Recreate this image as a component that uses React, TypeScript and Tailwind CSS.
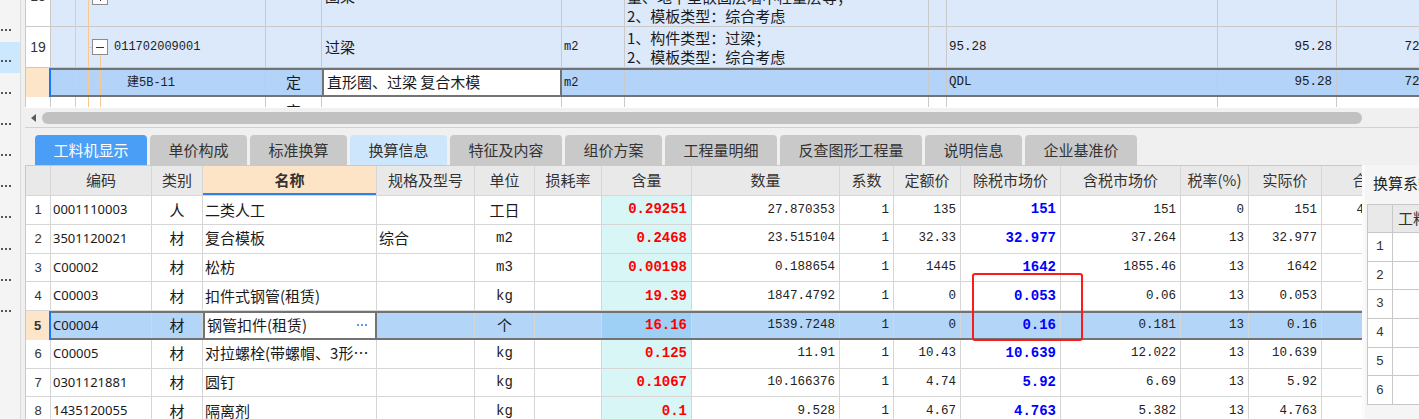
import clsx from 'clsx';

// ============= Data =============

type TreeKind = 'collapsed' | 'expanded' | 'leaf' | 'cont';

type TopRowData = {
  no: string;
  tree: TreeKind;
  code: string;
  indent: string;
  type?: string;
  name?: string;
  unit?: string;
  feat?: string[];
  expr?: string;
  qty?: string;
  last?: string;
  h: string;
  mt?: string;
  selected?: boolean;
  bg: string;
};

const topRows: TopRowData[] = [
  {
    no: '18',
    tree: 'collapsed',
    code: '011702008002',
    indent: 'left-[63px]',
    name: '圈梁',
    unit: 'm2',
    feat: ['1、构件类型：圈梁（含地下室嵌固层', '量、地下室嵌固层墙中柱量层等；', '2、模板类型：综合考虑'],
    expr: '100.76',
    qty: '100.76',
    last: '72.47',
    h: 'h-[60px]',
    mt: '-mt-[33px]',
    bg: 'bg-[#dce9fb]',
  },
  {
    no: '19',
    tree: 'expanded',
    code: '011702009001',
    indent: 'left-[63px]',
    name: '过梁',
    unit: 'm2',
    feat: ['1、构件类型：过梁；', '2、模板类型：综合考虑'],
    expr: '95.28',
    qty: '95.28',
    last: '72.47',
    h: 'h-[41px]',
    bg: 'bg-[#dce9fb]',
  },
  {
    no: '',
    tree: 'leaf',
    code: '建5B-11',
    indent: 'left-[76px]',
    type: '定',
    name: '直形圈、过梁 复合木模',
    unit: 'm2',
    expr: 'QDL',
    qty: '95.28',
    last: '72.47',
    h: 'h-[29px]',
    selected: true,
    bg: 'bg-[#b3d4f8]',
  },
  {
    no: '',
    tree: 'cont',
    code: '',
    indent: 'left-[76px]',
    type: '定',
    h: 'h-[29px]',
    bg: 'bg-white',
  },
];

type BottomRowData = {
  code: string;
  cat: string;
  name: string;
  spec?: string;
  unit: string;
  amt: string;
  qty: string;
  quota: string;
  mkt: string;
  mktTax: string;
  rate: string;
  real: string;
  total?: string;
};

const bottomRows: BottomRowData[] = [
  { code: '0001110003', cat: '人', name: '二类人工', unit: '工日', amt: '0.29251', qty: '27.870353', quota: '135', mkt: '151', mktTax: '151', rate: '0', real: '151', total: '4208.42' },
  { code: '3501120021', cat: '材', name: '复合模板', spec: '综合', unit: 'm2', amt: '0.2468', qty: '23.515104', quota: '32.33', mkt: '32.977', mktTax: '37.264', rate: '13', real: '32.977' },
  { code: 'C00002', cat: '材', name: '松枋', unit: 'm3', amt: '0.00198', qty: '0.188654', quota: '1445', mkt: '1642', mktTax: '1855.46', rate: '13', real: '1642' },
  { code: 'C00003', cat: '材', name: '扣件式钢管(租赁)', unit: 'kg', amt: '19.39', qty: '1847.4792', quota: '0', mkt: '0.053', mktTax: '0.06', rate: '13', real: '0.053' },
  { code: 'C00004', cat: '材', name: '钢管扣件(租赁)', unit: '个', amt: '16.16', qty: '1539.7248', quota: '0', mkt: '0.16', mktTax: '0.181', rate: '13', real: '0.16' },
  { code: 'C00005', cat: '材', name: '对拉螺栓(带螺帽、3形卡件)', unit: 'kg', amt: '0.125', qty: '11.91', quota: '10.43', mkt: '10.639', mktTax: '12.022', rate: '13', real: '10.639' },
  { code: '0301121881', cat: '材', name: '圆钉', unit: 'kg', amt: '0.1067', qty: '10.166376', quota: '4.74', mkt: '5.92', mktTax: '6.69', rate: '13', real: '5.92' },
  { code: '1435120055', cat: '材', name: '隔离剂', unit: 'kg', amt: '0.1', qty: '9.528', quota: '4.67', mkt: '4.763', mktTax: '5.382', rate: '13', real: '4.763' },
];

const SELECTED_ROW = 4;

const tabs = [
  { label: '工料机显示', w: 'w-[112px]', tone: 'bg-[#4a9ef6] text-white' },
  { label: '单价构成', w: 'w-[97px]', tone: 'bg-[#c9c9c9] text-[#333]' },
  { label: '标准换算', w: 'w-[97px]', tone: 'bg-[#c9c9c9] text-[#333]' },
  { label: '换算信息', w: 'w-[97px]', tone: 'bg-[#cde6fb] text-[#333]' },
  { label: '特征及内容', w: 'w-[112px]', tone: 'bg-[#c9c9c9] text-[#333]' },
  { label: '组价方案', w: 'w-[97px]', tone: 'bg-[#c9c9c9] text-[#333]' },
  { label: '工程量明细', w: 'w-[112px]', tone: 'bg-[#c9c9c9] text-[#333]' },
  { label: '反查图形工程量', w: 'w-[142px]', tone: 'bg-[#c9c9c9] text-[#333]' },
  { label: '说明信息', w: 'w-[97px]', tone: 'bg-[#c9c9c9] text-[#333]' },
  { label: '企业基准价', w: 'w-[112px]', tone: 'bg-[#c9c9c9] text-[#333]' },
];

const MONO = "font-['Liberation_Mono','Noto_Sans_CJK_SC',monospace]";
const GRID_LINE = 'border-[#c9c9c9]';
const CELL_LINE = 'border-[#d6d6d6]';

// ============= Left strip =============

function LeftStrip() {
  return (
    <div className="flex w-[25px] shrink-0">
      <div className="w-[21px] shrink-0 border-r border-[#dcdcdc] bg-[#f4f4f4] pt-[11px]">
        {Array.from({ length: 10 }).map((_, i) => (
          <div
            key={i}
            className={clsx('flex h-[31.2px] items-end pb-[11px]', i === 1 && 'bg-[#cce8ff]')}
          >
            <div className="flex gap-[2px] pl-[1px]">
              <span className="h-[2px] w-[2px] bg-[#555]" />
              <span className="h-[2px] w-[2px] bg-[#555]" />
              <span className="h-[2px] w-[2px] bg-[#555]" />
            </div>
          </div>
        ))}
      </div>
    </div>
  );
}

// ============= Top grid =============

function Tree({ kind }: { kind: TreeKind }) {
  return (
    <>
      <span className="absolute bottom-0 left-[24px] top-0 w-px bg-[#f8c88f]" />
      <span className="absolute bottom-0 left-[37px] top-0 w-px bg-[#f8c88f]" />
      {kind === 'expanded' && (
        <span className="absolute bottom-0 left-[49px] top-[calc(50%+8px)] w-px bg-[#f8c88f]" />
      )}
      {(kind === 'leaf' || kind === 'cont') && (
        <span className="absolute bottom-0 left-[49px] top-0 w-px bg-[#f8c88f]" />
      )}
      {kind === 'leaf' && <span className="absolute left-[49px] top-1/2 h-px w-[20px] bg-[#f8c88f]" />}
      {(kind === 'collapsed' || kind === 'expanded') && (
        <>
          <span className="absolute left-[37px] top-1/2 h-px w-[4px] bg-[#f8c88f]" />
          <span className="absolute left-[41px] top-1/2 h-[16px] w-[16px] -translate-y-1/2 border border-[#8c8c8c] bg-white">
            <span className="absolute left-[3px] top-[6.5px] h-px w-[8px] bg-[#333]" />
            {kind === 'collapsed' && <span className="absolute left-[6.5px] top-[3px] h-[8px] w-px bg-[#333]" />}
          </span>
        </>
      )}
    </>
  );
}

function TopRow({ r }: { r: TopRowData }) {
  const sel = r.selected;
  const cell = clsx('flex h-full shrink-0 items-center border-r', GRID_LINE);
  return (
    <div className={clsx('flex shrink-0', r.h, r.mt, !sel && 'border-b', GRID_LINE)}>
      <div
        className={clsx(
          "flex w-[25px] shrink-0 items-center justify-center font-['Liberation_Sans',sans-serif] text-[14px] text-[#333]",
          sel ? 'border-r-2 border-r-[#1677ff] bg-[#fde5c9]' : clsx('border-r bg-white', GRID_LINE),
        )}
      >
        {r.no}
      </div>
      <div className={clsx('flex min-w-0 flex-1', r.bg, sel && 'border-y-2 border-[#737373]')}>
        <div className={clsx('relative w-[215px] shrink-0 border-r', GRID_LINE)}>
          <Tree kind={r.tree} />
          <span className={clsx('absolute top-1/2 -translate-y-1/2 whitespace-nowrap text-[12px] text-[#222]', MONO, r.indent)}>
            {r.code}
          </span>
        </div>
        <div className={clsx(cell, 'w-[56px] justify-center text-[15px]')}>{r.type}</div>
        <div
          className={clsx(
            'flex h-full w-[240px] shrink-0 items-center whitespace-nowrap pl-[3px] text-[15px]',
            sel ? 'border-x-2 border-[#737373] bg-white' : clsx('border-r', GRID_LINE),
          )}
        >
          {r.name}
        </div>
        <div className={clsx(cell, 'w-[63px] pl-[2px] text-[12px]', MONO)}>{r.unit}</div>
        <div className={clsx(cell, 'w-[304px] pl-[2px]')}>
          <div className="whitespace-nowrap text-[15px] leading-[19px]">
            {r.feat?.map((l) => (
              <div key={l}>{l}</div>
            ))}
          </div>
        </div>
        <div className={clsx(cell, 'w-[18px]')} />
        <div className={clsx(cell, 'w-[271px] pl-[2px] text-[12.5px]', MONO)}>{r.expr}</div>
        <div className={clsx(cell, 'w-[119px] justify-end pr-[4px] text-[12.5px]', MONO)}>{r.qty}</div>
        <div className={clsx(cell, 'w-[110px] justify-end pr-[4px] text-[12.5px]', MONO)}>{r.last}</div>
      </div>
    </div>
  );
}

function TopGrid() {
  return (
    <div className={clsx('flex h-[107px] shrink-0 flex-col overflow-hidden border-l bg-white', GRID_LINE)}>
      {topRows.map((r, i) => (
        <TopRow key={i} r={r} />
      ))}
    </div>
  );
}

function HScroll() {
  return (
    <div className="flex h-[21px] shrink-0 items-center border-b border-t border-b-[#d2d2d2] border-t-white bg-[#f0f0f0]">
      <span className="ml-[6px] h-0 w-0 border-y-[4px] border-r-[5px] border-y-transparent border-r-[#5c5c5c]" />
      <span className="ml-[6px] h-[12px] w-[1320px] rounded-full bg-[#c1c1c1]" />
    </div>
  );
}

function Tabs() {
  return (
    <div className="flex h-[37px] shrink-0 items-end gap-[3px] bg-[#f0f0f0] pl-[10px]">
      {tabs.map((t) => (
        <div
          key={t.label}
          className={clsx('flex h-[30px] items-center justify-center rounded-t-[4px] text-[15px]', t.w, t.tone)}
        >
          {t.label}
        </div>
      ))}
    </div>
  );
}

// ============= Bottom grid =============

const cols = [
  { key: 'code', title: '编码', w: 'w-[101px]' },
  { key: 'cat', title: '类别', w: 'w-[51px]' },
  { key: 'name', title: '名称', w: 'w-[174px]' },
  { key: 'spec', title: '规格及型号', w: 'w-[98px]' },
  { key: 'unit', title: '单位', w: 'w-[60px]' },
  { key: 'loss', title: '损耗率', w: 'w-[67px]' },
  { key: 'amt', title: '含量', w: 'w-[90px]' },
  { key: 'qty', title: '数量', w: 'w-[148px]' },
  { key: 'coef', title: '系数', w: 'w-[54px]' },
  { key: 'quota', title: '定额价', w: 'w-[67px]' },
  { key: 'mkt', title: '除税市场价', w: 'w-[100px]' },
  { key: 'mktTax', title: '含税市场价', w: 'w-[120px]' },
  { key: 'rate', title: '税率(%)', w: 'w-[68px]' },
  { key: 'real', title: '实际价', w: 'w-[73px]' },
  { key: 'total', title: '合价', w: 'w-[92px]' },
];

function BCell({ w, className, children }: { w: string; className?: string; children?: React.ReactNode }) {
  return (
    <div className={clsx('flex h-full shrink-0 items-center overflow-hidden whitespace-nowrap border-r', CELL_LINE, w, className)}>
      {children}
    </div>
  );
}

function BottomRow({ r, idx }: { r: BottomRowData; idx: number }) {
  const sel = idx === SELECTED_ROW;
  const num = clsx('justify-end pr-[4px] text-[12.5px] text-[#222]', MONO);
  const isAscii = /^[a-z0-9]+$/i.test(r.unit);
  return (
    <div className={clsx('flex h-[28.75px] shrink-0', !sel && 'border-b', CELL_LINE)}>
      <div
        className={clsx(
          "flex w-[25px] shrink-0 items-center justify-center font-['Liberation_Sans',sans-serif] text-[13px] text-[#333]",
          sel ? 'border-r-2 border-r-[#1677ff] bg-[#fde5c9] font-bold' : clsx('border-r bg-white', CELL_LINE),
        )}
      >
        {idx + 1}
      </div>
      <div className={clsx('flex', sel ? 'border-y-2 border-[#737373] bg-[#b3d5f8]' : 'bg-white')}>
        <BCell w="w-[101px]" className="pl-[2px] font-['Noto_Sans','Noto_Sans_CJK_SC',sans-serif] text-[13px]">
          {r.code}
        </BCell>
        <BCell w="w-[51px]" className="justify-center text-[15px]">{r.cat}</BCell>
        <div
          className={clsx(
            'flex h-full w-[174px] shrink-0 items-center justify-between pl-[2px] text-[15px]',
            sel ? 'border-x-2 border-[#737373] bg-white pr-[8px]' : clsx('border-r pr-[1px]', CELL_LINE),
          )}
        >
          <span className="min-w-0 truncate">{r.name}</span>
          {sel && (
            <span className="flex gap-[2px]">
              <span className="h-[2px] w-[2px] bg-[#5b9ee8]" />
              <span className="h-[2px] w-[2px] bg-[#5b9ee8]" />
              <span className="h-[2px] w-[2px] bg-[#5b9ee8]" />
            </span>
          )}
        </div>
        <BCell w="w-[98px]" className="pl-[2px] text-[15px]">{r.spec}</BCell>
        <BCell w="w-[60px]" className={clsx('justify-center', isAscii ? clsx('text-[14px]', MONO) : 'text-[15px]')}>
          {r.unit}
        </BCell>
        <BCell w="w-[67px]" />
        <BCell
          w="w-[90px]"
          className={clsx('justify-end pr-[4px] text-[14px] font-bold text-[#ff0000]', MONO, sel ? 'bg-[#9ecff5]' : 'bg-[#d9f6f7]')}
        >
          {r.amt}
        </BCell>
        <BCell w="w-[148px]" className={num}>{r.qty}</BCell>
        <BCell w="w-[54px]" className={num}>1</BCell>
        <BCell w="w-[67px]" className={num}>{r.quota}</BCell>
        <BCell w="w-[100px]" className={clsx('justify-end pr-[4px] text-[14px] font-bold text-[#0000ff]', MONO)}>
          {r.mkt}
        </BCell>
        <BCell w="w-[120px]" className={num}>{r.mktTax}</BCell>
        <BCell w="w-[68px]" className={num}>{r.rate}</BCell>
        <BCell w="w-[73px]" className={num}>{r.real}</BCell>
        <BCell w="w-[92px]" className={num}>{r.total}</BCell>
      </div>
    </div>
  );
}

function BottomGrid() {
  return (
    <div className={clsx('flex w-[1337px] shrink-0 flex-col overflow-hidden border-l border-t bg-white', GRID_LINE)}>
      <div className={clsx('flex h-[30px] shrink-0 border-b bg-[#e9e9e9]', CELL_LINE)}>
        <div className={clsx('w-[25px] shrink-0 border-r', CELL_LINE)} />
        {cols.map((c) => (
          <div
            key={c.key}
            className={clsx(
              'flex h-full shrink-0 items-center justify-center whitespace-nowrap border-r text-[15px] text-[#333]',
              CELL_LINE,
              c.w,
              c.key === 'name' && 'bg-[#fde4c6] font-bold text-[#111] shadow-[inset_0_-2px_0_#2f7ff0]',
            )}
          >
            {c.title}
          </div>
        ))}
      </div>
      {bottomRows.map((r, i) => (
        <BottomRow key={r.code} r={r} idx={i} />
      ))}
    </div>
  );
}

function SidePanel() {
  return (
    <div className="min-w-0 flex-1 overflow-hidden border-l-[3px] border-[#fbfbfb] bg-[#f5f5f5]">
      <div className="w-[200px] pt-[3px]">
        <div className="flex h-[31px] items-center whitespace-nowrap pl-[8px] text-[15px] text-[#222]">换算系数</div>
        <div className="ml-[2px] mt-[5px] border-l border-t border-[#c8c8c8]">
          <div className="flex h-[28px] border-b border-[#c8c8c8] bg-[#e9e9e9]">
            <div className="w-[25px] border-r border-[#c8c8c8]" />
            <div className="flex w-[120px] items-center border-r border-[#c8c8c8] pl-[5px] text-[15px] text-[#333]">
              工料机编号
            </div>
          </div>
          {[1, 2, 3, 4, 5, 6].map((n) => (
            <div key={n} className="flex h-[28.7px] border-b border-[#c8c8c8] bg-white">
              <div className="flex w-[25px] items-center justify-center border-r border-[#c8c8c8] font-['Liberation_Mono',monospace] text-[13px] text-[#333]">
                {n}
              </div>
              <div className="w-[120px] border-r border-[#c8c8c8]" />
            </div>
          ))}
        </div>
      </div>
    </div>
  );
}

// ============= Page =============

export default function App() {
  return (
    <div className="flex h-[419px] w-[1419px] overflow-hidden bg-[#f0f0f0] font-['Noto_Sans_CJK_SC',sans-serif] text-[#1a1a1a]">
      <LeftStrip />
      <div className="flex min-w-0 flex-1 flex-col">
        <TopGrid />
        <HScroll />
        <Tabs />
        <div className="relative flex min-h-0 flex-1">
          <BottomGrid />
          <SidePanel />
          {/* highlight box drawn over the 除税市场价 cells */}
          <div className="pointer-events-none absolute left-[947px] top-[108px] h-[68px] w-[111px] rounded-[3px] border-2 border-[#ff1a1a]" />
        </div>
      </div>
    </div>
  );
}
